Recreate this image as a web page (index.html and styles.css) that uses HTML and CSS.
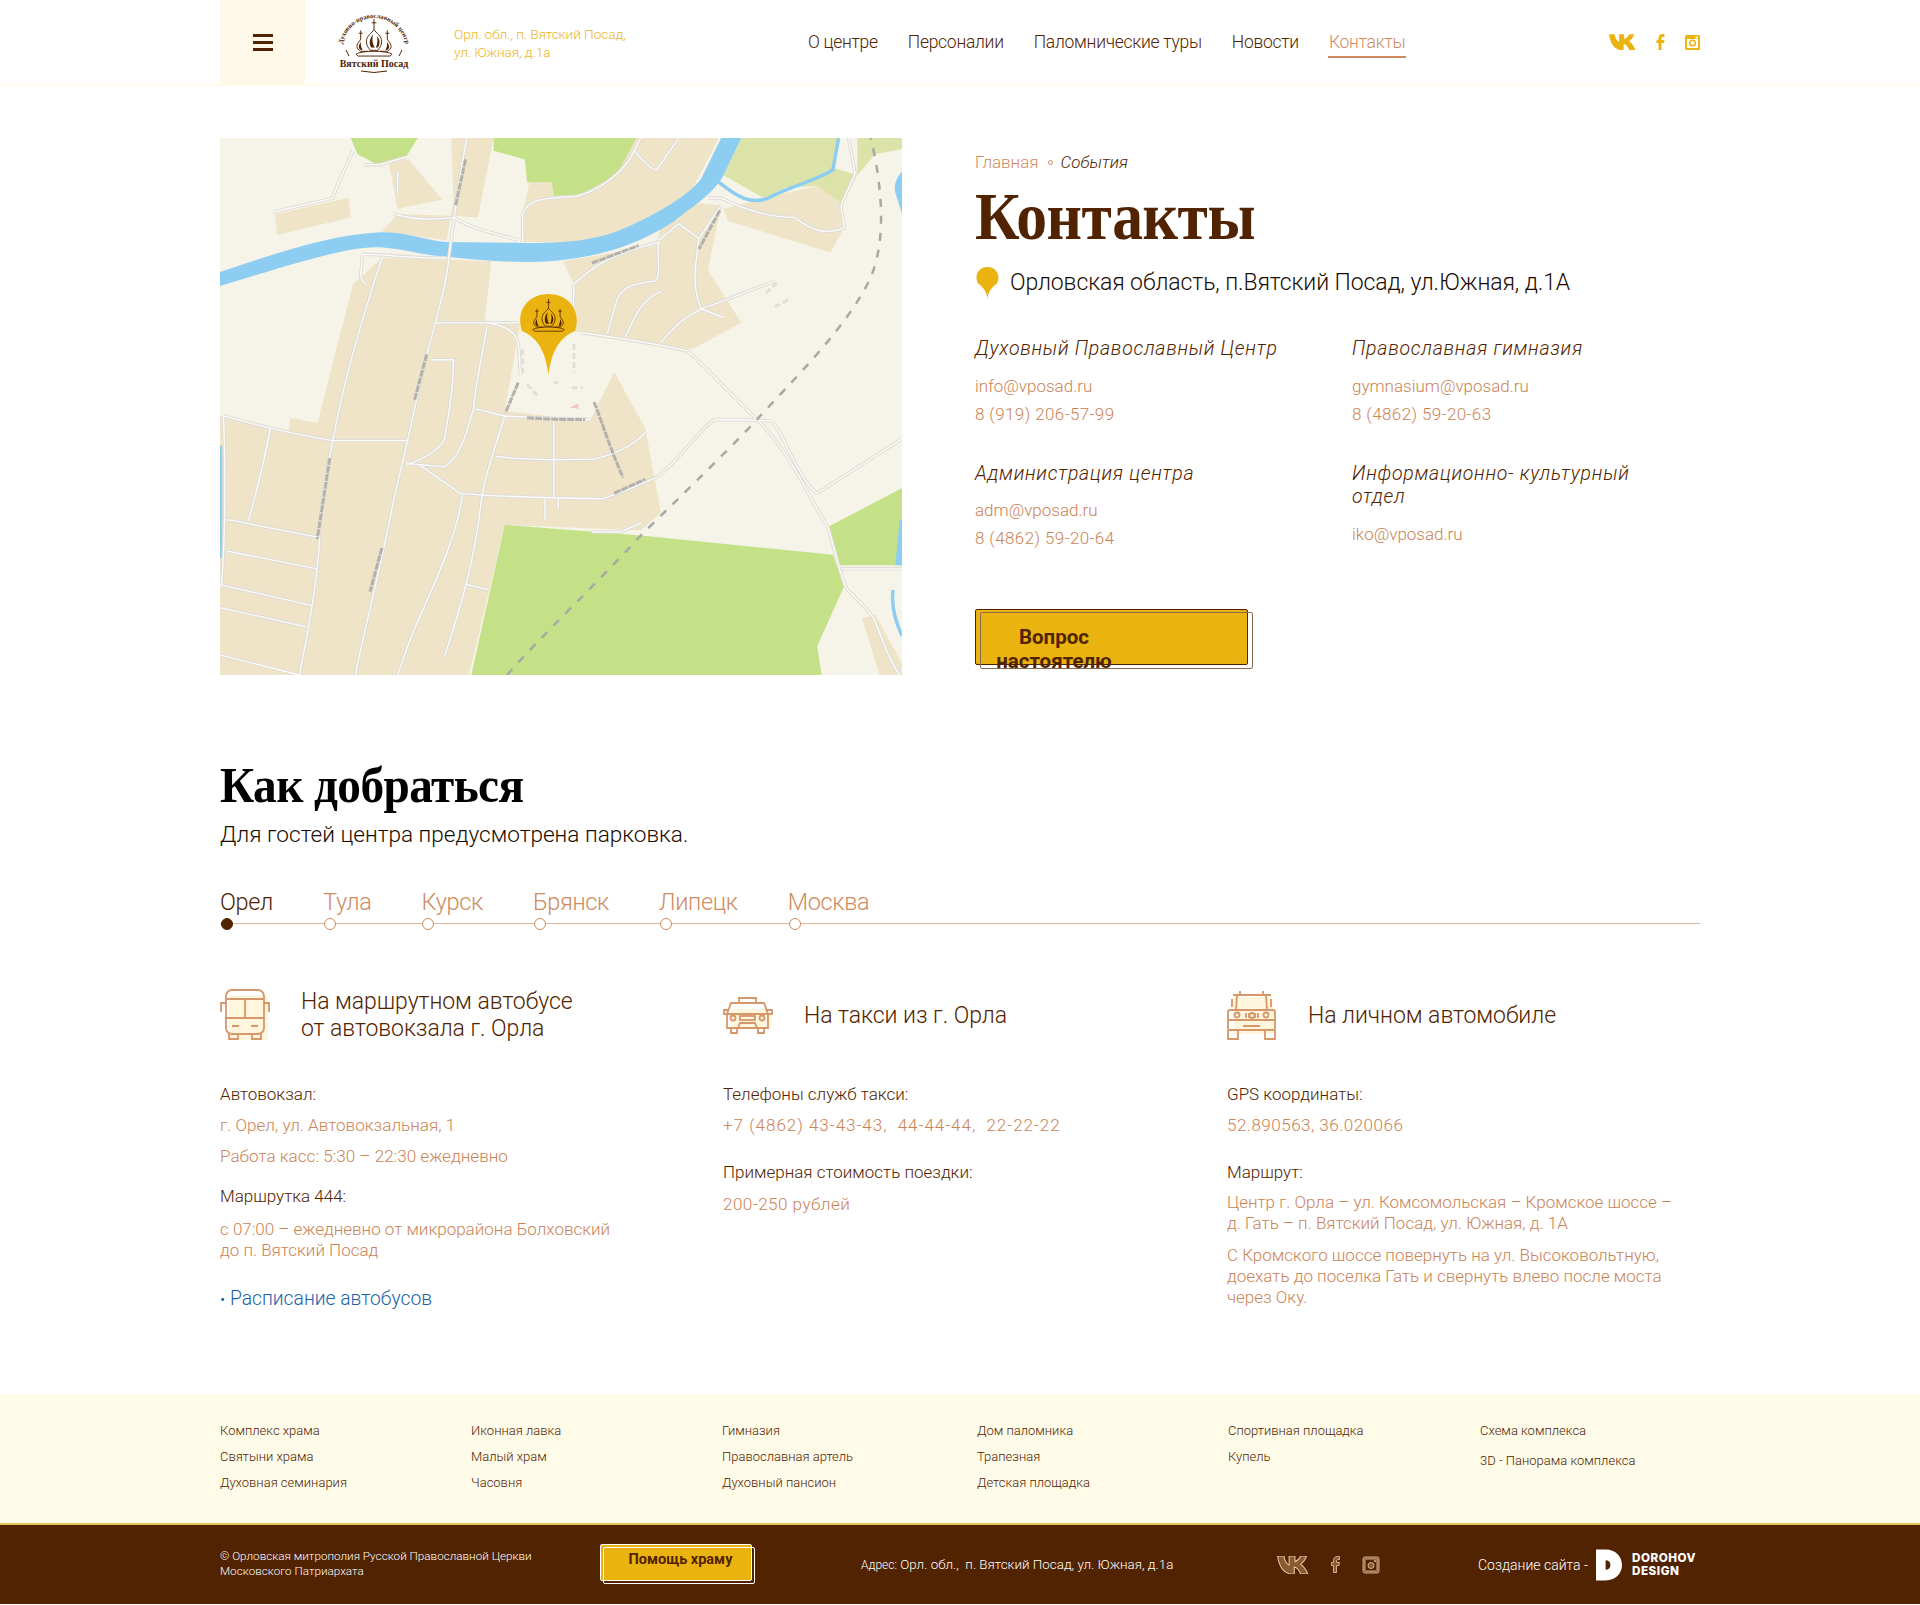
FILE: index.html
```html
<!DOCTYPE html>
<html lang="ru">
<head>
<meta charset="utf-8">
<title>Контакты</title>
<link rel="stylesheet" href="styles.css">
</head>
<body>
<svg class="defs" width="0" height="0" aria-hidden="true">
  <symbol id="domes" viewBox="0 0 40 40">
    <g class="domes-g">
      <path d="M20 0V11M17.500 4H22.500M6 12V21M4 15H8M34 12V21M32 15H36"/>
      <path d="M20 11C18 15 12 17 12 24C12 28 14 30 16 33H24C26 30 28 28 28 24C28 17 22 15 20 11Z"/>
      <path class="domes-f" d="M17 30C14 25 16 20 19 16C18 20 18 26 21 30ZM24 30C27 26 26 21 23 18C24 22 24 26 22 30Z"/>
      <path d="M6 21C5 24 2 25 2 29C2 31 4 33 6 34H14M34 21C35 24 38 25 38 29C38 31 36 33 34 34H26"/>
      <path class="domes-f" d="M5 32C3 29 5 26 6 24C6 27 6 29 8 33ZM35 32C37 29 35 26 34 24C34 27 34 29 32 33Z"/>
      <path d="M1 37C6 33 34 33 39 37L37 39H3Z"/>
    </g>
  </symbol>
  <symbol id="vk" viewBox="0 0 24 14"><path d="M0 0H5C5.300 3 7 6 9 7V0H13.500V4.500C15 4 17 2 18 0H22.500C21.700 2.500 19.800 5 18 6.500C20 7.800 22 10 23.500 14H18C17 11.500 15 9 13 8.500V14H11C5 14 1 8 0 0Z"/></symbol>
  <symbol id="fb" viewBox="0 0 9 16"><path d="M5.500 16V9H8L8.500 6H5.500V4.500C5.500 3.500 6 3 7 3H8.500V0H6.500C4 0 2.500 1.500 2.500 4V6H.5V9H2.500V16Z"/></symbol>
</svg>

<header class="header">
  <div class="burger"><span></span><span></span><span></span></div>
  <svg class="logo" viewBox="0 0 74 64" role="img" aria-label="Вятский Посад">
    <defs><path id="arc" d="M5 40A32 32 0 1 1 69 40"/></defs>
    <text class="logo-arc"><textPath href="#arc" startOffset="50%" text-anchor="middle">Духовно-православный центр</textPath></text>
    <use href="#domes" x="16" y="9" width="42" height="38"/>
    <path class="logo-tick" d="M9 40L12 46M65 40L62 46"/>
    <text class="logo-name" x="37" y="57" text-anchor="middle">Вятский Посад</text>
    <path class="logo-tick" d="M24 61Q37 64 50 61"/>
  </svg>
  <div class="head-addr">Орл. обл., п. Вятский Посад,<br>ул. Южная, д.1а</div>
  <nav class="nav">
    <a>О центре</a><a>Персоналии</a><a>Паломнические туры</a><a>Новости</a><a class="active">Контакты</a>
  </nav>
  <div class="social">
    <svg class="ic-vk"><use href="#vk"/></svg>
    <svg class="ic-f"><use href="#fb"/></svg>
    <svg class="ic-i" viewBox="0 0 15 15"><rect class="ig-b" width="15" height="15" rx="1.500"/><rect class="ig-w" x="2" y="4" width="11" height="9"/><circle class="ig-c" cx="7.500" cy="8" r="2.800"/><rect class="ig-d" x="10.500" y="1.500" width="2.500" height="2"/></svg>
  </div>
</header>

<main class="wrap">
  <section class="top">
    <div class="map">
      <svg class="map-svg" viewBox="22 24 1528 1528" preserveAspectRatio="none">
        <defs><filter id="soft"><feGaussianBlur stdDeviation="0.55"/></filter></defs>
        <g filter="url(#soft)">
        <rect class="m-cream" x="22" y="24" width="1528" height="1528"/>
        <g class="m-beige">
          <polygon points="385,365 630,375 615,545 695,550 660,800 850,830 905,690 975,850 1010,1090 965,1140 660,1125 580,1552 22,1552 22,815 175,860 180,820 240,835 320,440"/>
          <polygon points="540,24 635,24 600,250 540,245 420,240 385,290 530,315 545,200"/>
          <polygon points="950,24 1140,24 1080,170 980,260 850,320 695,320 700,240 715,150 765,150 770,190 830,185 910,130"/>
          <polygon points="145,240 310,195 315,250 150,300"/>
          <polygon points="790,375 1000,330 1010,270 1095,210 1145,215 1115,400 1190,550 1080,625 820,575 815,440"/>
          <polygon points="1150,225 1160,260 1390,350 1420,280 1410,200 1360,160 1260,190 1200,210"/>
          <polygon points="400,95 445,85 520,200 420,225"/>
          <polygon points="1460,1390 1490,1380 1550,1520 1550,1552 1500,1552"/>
        </g>
        <g class="m-green">
          <polygon points="315,24 465,24 440,75 375,100 330,70"/>
          <polygon points="635,24 955,24 910,130 830,185 770,190 765,150 710,150 705,85 635,60"/>
          <polygon points="660,1125 965,1155 1395,1210 1420,1300 1360,1470 1370,1552 585,1552"/>
          <polygon points="1385,1130 1550,1020 1550,1240 1410,1240"/>
        </g>
        <g class="m-pale">
          <polygon points="1190,24 1405,24 1400,110 1450,130 1415,210 1360,160 1290,165 1240,195 1150,130"/>
          <polygon points="1450,24 1550,24 1550,55 1490,70 1450,130"/>
        </g>
        <path class="m-blue" d="M22 405C130 360 260 300 380 292C440 290 480 315 530 320L690 322C780 325 850 318 910 290C990 250 1070 190 1100 140L1145 24H1190L1150 130C1130 180 1080 220 1040 260C980 310 900 360 760 375C680 380 600 372 530 362C460 355 420 335 370 335C300 335 180 385 22 445Z"/>
        <path class="m-blue" d="M1535 180C1530 160 1540 130 1550 120V240C1545 220 1540 200 1535 180ZM22 900H27V1220H22ZM1545 1110H1550V1240H1535Z"/>
        <path class="m-river" d="M1140 150C1180 190 1210 215 1250 195C1300 160 1350 150 1395 115L1408 24M1530 1310C1525 1360 1535 1400 1550 1440"/>
        <g class="m-road"><g id="roads">
          <path d="M320 60C300 120 285 150 275 195L140 235M345 100L380 100 440 78M420 120V180M575 24C560 120 550 220 535 360C530 450 500 560 470 720C450 850 430 950 410 1060C390 1200 350 1400 325 1552"/>
          <path d="M410 240C450 255 500 258 545 250C590 285 640 295 690 315M700 320V240C710 200 740 195 820 190C870 175 930 120 950 60L965 24M950 60C970 90 990 115 1000 115L1050 24"/>
          <path d="M340 355C400 355 480 370 530 365M340 355C345 390 325 420 350 440M385 365C350 500 300 700 275 885C255 1000 240 1150 245 1165C240 1300 215 1450 200 1552"/>
          <path d="M815 440C815 480 810 530 815 575M815 440C850 400 880 360 1005 320C1000 360 1010 400 1000 430C940 440 920 450 910 490L890 580M1010 460C960 490 950 540 930 590M1005 315L1050 268 1095 310 1145 215M1115 195H1145C1200 230 1260 250 1310 250C1350 290 1380 300 1420 280C1420 240 1410 230 1415 210L1445 125L1430 24M1095 310C1085 400 1080 450 1100 510C1040 550 1030 580 1010 605M1100 510C1150 490 1220 450 1270 430M1100 510L1150 535"/>
          <path d="M505 550H690M620 550C700 565 690 600 695 700M620 560C610 640 595 720 590 795C570 880 560 930 525 960L440 950M495 655H545C545 750 530 840 525 880C510 920 470 940 440 955M595 795L660 815C720 820 780 822 850 825M660 815C640 900 610 1000 605 1080C590 1250 550 1400 525 1500"/>
          <path d="M30 815C100 840 200 870 275 885H440M135 850C120 950 100 1050 85 1115M30 815C35 1000 35 1150 25 1300M40 1110L240 1160M40 1200L240 1250M22 1295L230 1355M22 1360L215 1415M22 1495L200 1552"/>
          <path d="M470 955L560 1035C650 1045 800 1050 880 1050C930 1030 960 1010 1000 990C1060 930 1090 860 1130 825C1180 825 1200 825 1260 830M640 930C700 940 800 940 860 938C900 925 950 900 975 860M770 830V1050M750 1050V1110M780 1050V1080M565 1040C555 1150 500 1300 465 1400C440 1470 430 1520 420 1552M575 1295L625 1310M855 1145H920L965 1120"/>
          <path d="M830 578C900 590 1000 610 1070 630C1130 700 1170 760 1225 825C1290 900 1340 1040 1385 1135C1400 1200 1415 1280 1425 1305C1450 1340 1480 1370 1490 1400C1510 1470 1530 1530 1545 1552M1415 1250H1550M1360 1035L1550 880M1260 830C1290 880 1320 1000 1360 1035"/>
        </g></g>
        <g class="m-road-in"><use href="#roads"/></g>
        <path class="m-rail" d="M665 1552C750 1430 860 1300 965 1155C1040 1060 1140 940 1225 825C1300 720 1430 560 1480 420C1520 300 1500 130 1480 24"/>
        <g class="m-dark">
          <path d="M572 85L550 215M1142 230L1095 340M855 380L960 330M485 640L458 770M690 720L662 805M710 820C760 825 800 825 840 825M860 775C880 840 900 920 925 990M905 1035L975 995M268 935L240 1165M385 1190L358 1315"/>
        </g>
        <g class="m-faint">
          <path d="M700 625V700M815 610V690M710 725L735 760M770 720H780M810 735H835M1245 465L1270 435M1265 505L1300 480"/>
        </g>
        <path class="m-red" d="M805 790L825 780V795Z"/>
        </g>
      </svg>
      <svg class="map-pin" viewBox="0 0 59 81">
        <path class="pin-f" d="M29.500 81C27 60 20 44 3 37C-4 16 10 0 29.500 0C49 0 63 16 56 37C39 44 32 60 29.500 81Z"/>
        <use href="#domes" x="13" y="5" width="33" height="33"/>
      </svg>
    </div>
    <div class="info">
      <div class="crumbs"><a>Главная</a><i class="crumb-dot"></i><em>События</em></div>
      <h1 class="title">Контакты</h1>
      <div class="addr">
        <svg class="addr-pin" viewBox="0 0 24 32"><path class="pin-f" d="M12 32C11.500 26 9 21 3 17C-2 9 3 0 12 0C21 0 26 9 21 17C15 21 12.500 26 12 32Z"/></svg>
        <span>Орловская область, п.Вятский Посад, ул.Южная, д.1А</span>
      </div>
      <div class="contacts">
        <div class="c-item">
          <h3>Духовный Православный Центр</h3>
          <a>info@vposad.ru</a><a class="tel">8 (919) 206-57-99</a>
        </div>
        <div class="c-item">
          <h3>Православная гимназия</h3>
          <a>gymnasium@vposad.ru</a><a class="tel">8 (4862) 59-20-63</a>
        </div>
        <div class="c-item">
          <h3>Администрация центра</h3>
          <a>adm@vposad.ru</a><a class="tel">8 (4862) 59-20-64</a>
        </div>
        <div class="c-item">
          <h3>Информационно- культурный отдел</h3>
          <a>iko@vposad.ru</a>
        </div>
      </div>
      <a class="ask"><span>Вопрос настоятелю</span></a>
    </div>
  </section>

  <section class="how">
    <h2 class="how-title">Как добраться</h2>
    <p class="how-sub">Для гостей центра предусмотрена парковка.</p>
    <div class="tabs">
      <a class="tab on">Орел</a><a class="tab">Тула</a><a class="tab">Курск</a><a class="tab">Брянск</a><a class="tab">Липецк</a><a class="tab">Москва</a>
    </div>
    <div class="ways">
      <div class="way">
        <div class="way-head">
          <svg class="way-ic" viewBox="0 0 50 52">
            <rect class="ic-bg" x="9" y="6" width="39" height="45" rx="3"/>
            <g class="ic-ln">
              <rect x="6" y="1" width="38" height="44" rx="6"/>
              <path d="M6 10H44M6 29H44M25 10V29M6 14H1V23M44 14H49V23M12 37H19M31 37H38M9 45V50H18V45M32 45V50H41V45"/>
            </g>
          </svg>
          <div class="way-title">На маршрутном автобусе<br>от автовокзала г. Орла</div>
        </div>
        <p class="lab">Автовокзал:</p>
        <p class="val">г. Орел, ул. Автовокзальная, 1</p>
        <p class="val">Работа касс: 5:30 – 22:30 ежедневно</p>
        <p class="lab sp">Маршрутка 444:</p>
        <p class="val tight">с 07:00 – ежедневно от микрорайона Болховский<br>до п. Вятский Посад</p>
        <a class="sched"><i>•</i> Расписание автобусов</a>
      </div>
      <div class="way">
        <div class="way-head">
          <svg class="way-ic taxi" viewBox="0 0 50 40">
            <path class="ic-bg" d="M8 14H42L48 20V34H8Z"/>
            <g class="ic-ln">
              <path d="M16 8V3H33V8M8 8H41L45 19V33H4V19ZM4 19H45M4 19H1V15H5M45 19H49V15H44M8 33V38H14V33M35 33V38H41V33M15 33L17 28H32L34 33"/>
              <rect x="17" y="21" width="15" height="4"/><circle cx="10" cy="23" r="2.500"/><circle cx="39" cy="23" r="2.500"/>
            </g>
          </svg>
          <div class="way-title">На такси из г. Орла</div>
        </div>
        <p class="lab">Телефоны служб такси:</p>
        <p class="val wide">+7 (4862) 43-43-43,&nbsp; 44-44-44,&nbsp; 22-22-22</p>
        <p class="lab sp2">Примерная стоимость поездки:</p>
        <p class="val num">200-250 рублей</p>
      </div>
      <div class="way">
        <div class="way-head">
          <svg class="way-ic" viewBox="0 0 50 50">
            <path class="ic-bg" d="M6 7H46V22H49V44H6Z"/>
            <g class="ic-ln">
              <path d="M9 20L10 5H39L40 20M6 5H44M13 1V5M36 1V5M5 9V17M44 9V17"/>
              <rect x="1" y="20" width="47" height="20" rx="2"/>
              <path d="M1 30H48M1 40V49H11V40M38 40V49H48V40M16 36H33M19 23V28M22 23V28M28 23V28M31 23V28"/>
              <circle cx="10" cy="25" r="2.500"/><circle cx="39" cy="25" r="2.500"/><circle cx="25" cy="25.500" r="2.500"/>
            </g>
          </svg>
          <div class="way-title">На личном автомобиле</div>
        </div>
        <p class="lab">GPS координаты:</p>
        <p class="val num">52.890563, 36.020066</p>
        <p class="lab sp2">Маршрут:</p>
        <p class="val tight">Центр г. Орла – ул. Комсомольская – Кромское шоссе –<br>д. Гать – п. Вятский Посад, ул. Южная, д. 1А</p>
        <p class="val tight next">С Кромского шоссе повернуть на ул. Высоковольтную,<br>доехать до поселка Гать и свернуть влево после моста<br>через Оку.</p>
      </div>
    </div>
  </section>
</main>

<footer>
  <div class="foot-nav">
    <div class="wrap foot-cols">
      <ul><li>Комплекс храма</li><li>Святыни храма</li><li>Духовная семинария</li></ul>
      <ul><li>Иконная лавка</li><li>Малый храм</li><li>Часовня</li></ul>
      <ul><li>Гимназия</li><li>Православная артель</li><li>Духовный пансион</li></ul>
      <ul class="w4"><li>Дом паломника</li><li>Трапезная</li><li>Детская площадка</li></ul>
      <ul><li>Спортивная площадка</li><li>Купель</li></ul>
      <ul class="last"><li>Схема комплекса</li><li>3D - Панорама комплекса</li></ul>
    </div>
  </div>
  <div class="foot-bot">
    <div class="wrap bot-row">
      <div class="copy">© Орловская митрополия Русской Православной Церкви<br>Московского Патриархата</div>
      <a class="help"><span>Помощь храму</span></a>
      <div class="foot-addr"><small>Адрес:</small> Орл. обл.,&nbsp; п. Вятский Посад, ул. Южная, д.1а</div>
      <div class="foot-soc">
        <svg class="fs-vk"><use href="#vk"/></svg>
        <svg class="fs-f"><use href="#fb"/></svg>
        <svg class="fs-i" viewBox="0 0 18 18"><rect x="1" y="1" width="16" height="16" rx="2"/><rect class="fs-in" x="3" y="3" width="12" height="12" rx="1"/><circle cx="9" cy="9.500" r="3"/><circle cx="13" cy="5" r=".8"/></svg>
      </div>
      <div class="made">Создание сайта -</div>
      <svg class="dd" viewBox="0 0 27 32"><path class="dd-w" d="M0 0H10C20 0 27 7 27 16C27 25 20 32 10 32H0ZM10 11V21C13 21 15 19 15 16C15 13 13 11 10 11Z"/></svg>
      <div class="dd-text">DOROHOV<br>DESIGN</div>
    </div>
  </div>
</footer>
</body>
</html>
```
FILE: styles.css
```css
* { box-sizing: border-box; }
html, body { margin: 0; padding: 0; }
body { font-family: "Roboto", "Noto Sans", sans-serif; font-weight: 300; color: #512300; background: #fff; }
a { color: inherit; text-decoration: none; }
p, h1, h2, h3, ul { margin: 0; padding: 0; }
ul { list-style: none; }
.defs { position: absolute; }
.wrap { width: 1480px; margin: 0 auto; }

/* domes */
.domes-g path { fill: none; stroke: #512300; stroke-width: 1; }
.domes-g .domes-f { fill: #512300; stroke: none; }

/* header */
.header { height: 86px; border-bottom: 2px solid #fffaea; display: flex; align-items: center; padding-left: 220px; }
.burger { width: 85px; height: 84px; background: #fef9e8; display: flex; flex-direction: column; justify-content: center; align-items: center; gap: 4px; flex: none; }
.burger span { width: 20px; height: 3px; background: #512300; }
.logo { width: 74px; height: 64px; margin-left: 32px; flex: none; overflow: visible; }
.logo-arc { font: bold 6.500px "Liberation Serif", serif; fill: #512300; }
.logo-name { font: bold 10px "Liberation Serif", serif; fill: #512300; }
.logo-tick { fill: none; stroke: #512300; stroke-width: 1; }
.head-addr { width: 300px; margin-left: 43px; padding-top: 2px; font-size: 13.700px; line-height: 18px; color: #eeb61c; letter-spacing: -.1px; }
.nav { display: flex; gap: 28px; margin-left: 53px; font-size: 17.500px; font-weight: 300; letter-spacing: -.28px; padding-top: 2px; }
.nav a { padding: 2px 1px 2px; border-bottom: 2px solid transparent; line-height: 23px; }
.nav a.active { color: #cf8b5f; border-bottom-color: #cf8b5f; }
.social { margin-left: auto; margin-right: 220px; display: flex; align-items: center; gap: 20px; }
.social svg { fill: #eab30f; display: block; }
.ic-vk { width: 27px; height: 16px; }
.ic-f { width: 9px; height: 16px; }
.ic-i { width: 15px; height: 15px; }
.ig-b { fill: #eab30f; }
.ig-w { fill: #fff; }
.ig-c { fill: none; stroke: #eab30f; stroke-width: 1.500; }
.ig-d { fill: #fff; }

/* top */
.top { display: flex; padding-top: 52px; }
.map { width: 682px; height: 537px; flex: none; position: relative; overflow: hidden; }
.map-svg { width: 682px; height: 537px; display: block; }
.m-cream { fill: #f6f4e9; }
.m-beige polygon { fill: #efe4c8; }
.m-green polygon { fill: #c5e188; }
.m-pale polygon { fill: #dbe3a8; }
.m-blue { fill: #8dcdf2; }
.m-river { fill: none; stroke: #8dcdf2; stroke-width: 3.500px; vector-effect: non-scaling-stroke; }
.m-road { fill: none; stroke: #dfddd8; stroke-width: 3.500px; }
.m-road path { vector-effect: non-scaling-stroke; }
.m-road-in { fill: none; stroke: #fdfcf8; stroke-width: 1.300px; }
.m-rail { fill: none; stroke: #a8a8a4; stroke-width: 2.500px; stroke-dasharray: 8 9; vector-effect: non-scaling-stroke; }
.m-dark path { fill: none; stroke: #b3b1ad; stroke-width: 3px; stroke-dasharray: 7 1; vector-effect: non-scaling-stroke; }
.m-faint path { fill: none; stroke: #e2e0d6; stroke-width: 3px; stroke-dasharray: 6 3; vector-effect: non-scaling-stroke; }
.m-red { fill: #f0c8b8; }
.map-pin { position: absolute; left: 299px; top: 156px; width: 59px; height: 81px; }
.pin-f { fill: #eab30f; }

.info { margin-left: 73px; flex: 1; padding-top: 14px; }
.crumbs { display: flex; align-items: center; font-size: 17px; line-height: 20px; color: #cf8b5f; }
.crumbs em { color: #512300; font-style: italic; }
.crumb-dot { width: 5px; height: 5px; border: 1px solid #cf8b5f; border-radius: 50%; margin: 0 8px 0 9px; }
.title { font: bold 67px/70px "Liberation Serif", serif; color: #512300; margin-top: 9px; letter-spacing: -.5px; transform: scaleX(.92); transform-origin: left center; }
.addr { display: flex; align-items: center; gap: 10px; margin-top: 16px; font-size: 23px; line-height: 32px; color: #1a0c00; letter-spacing: -.1px; }
.addr-pin { width: 25px; height: 32px; flex: none; }
.contacts { display: grid; grid-template-columns: 377px 1fr; row-gap: 34px; margin-top: 38px; }
.c-item { display: flex; flex-direction: column; }
.c-item h3 { font-size: 19.500px; font-weight: 300; font-style: italic; line-height: 23.500px; width: 310px; margin-bottom: 11px; letter-spacing: .72px; }
.c-item a { font-size: 17px; line-height: 28px; color: #ca8456; }
.c-item a.tel { letter-spacing: .4px; }
.ask { display: block; width: 273px; height: 56px; margin-top: 57px; background: #eab30f; border: 1px solid #512300; border-radius: 2px; position: relative; font-weight: 700; font-size: 20.500px; line-height: 24px; }
.ask::after { content: ""; position: absolute; left: 4px; top: 2px; width: 271px; height: 55px; border: 1px solid #8a6a50; border-radius: 2px; }
.ask span { display: block; width: 126px; margin-left: 15px; padding-top: 15px; height: 58px; overflow: hidden; text-align: center; position: relative; }

/* how */
.how { padding-top: 80px; }
.how-title { font: bold 50px/60px "Liberation Serif", serif; color: #000; letter-spacing: -.6px; transform: scaleX(.945); transform-origin: left center; }
.how-sub { font-size: 22.600px; line-height: 30px; color: #1a0c00; margin-top: 5px; }
.tabs { display: flex; gap: 50px; margin-top: 36px; border-bottom: 1px solid #e0b596; height: 38px; }
.tab { position: relative; font-size: 23.500px; line-height: 32px; color: #cf8b5f; letter-spacing: -.33px; }
.tab::after { content: ""; position: absolute; left: 1px; top: 32px; width: 10px; height: 10px; border-radius: 50%; border: 1px solid #cf8b5f; background: #fff; }
.tab.on { color: #512300; }
.tab.on::after { background: #512300; border-color: #512300; }
.ways { display: grid; grid-template-columns: 503px 504px 473px; margin-top: 65px; }
.way-head { display: flex; align-items: center; gap: 31px; height: 52px; margin-bottom: 41px; }
.way-ic { width: 50px; height: 52px; flex: none; }
.way-ic.taxi { height: 40px; }
.ic-bg { fill: #fff6dd; }
.ic-ln { fill: none; stroke: #d6976b; stroke-width: 1.800; }
.way-title { font-size: 23px; line-height: 27px; letter-spacing: -.05px; }
.lab { font-size: 17px; line-height: 24px; color: #512300; margin-bottom: 7px; }
.lab.sp { margin-top: 16px; margin-bottom: 11px; }
.lab.sp2 { margin-top: 23px; margin-bottom: 8px; }
.val { font-size: 17.100px; line-height: 24px; color: #ca8456; margin-bottom: 7px; }
.val.wide { letter-spacing: .95px; }
.val.num { letter-spacing: .45px; }
.val.tight { font-size: 17px; line-height: 21px; margin-bottom: 0; }
.val.next { margin-top: 11px; }
.sched { display: block; margin-top: 25px; font-size: 19.300px; line-height: 26px; color: #1a63a8; }
.sched i { font-style: normal; font-size: 16px; }

/* footer */
footer { margin-top: 81px; }
.foot-nav { height: 131px; background: #fffbe9; border-bottom: 2px solid #e8c25a; padding-top: 24px; }
.foot-cols { display: grid; grid-template-columns: 251px 251px 255px 251px 252px 1fr; }
.foot-cols li { font-size: 13px; line-height: 26px; }
.foot-cols .last li + li { margin-top: 4px; }
.foot-bot { height: 79px; background: #512300; color: #fff; }
.bot-row { display: flex; align-items: center; height: 79px; position: relative; }
.copy { width: 380px; font-size: 11.700px; line-height: 15px; color: #fff; margin-bottom: 2px; }
.help { display: block; width: 152px; height: 37px; margin-bottom: 4px; background: #eab30f; border: 1px solid #fff; border-radius: 2px; position: relative; color: #512300; font-weight: 700; font-size: 14.500px; line-height: 30px; text-align: center; padding-left: 9px; }
.help::after { content: ""; position: absolute; left: 2px; top: 2px; width: 150px; height: 35px; border: 1px solid #fff; border-radius: 2px; }
.foot-addr { width: 416px; margin-left: 109px; font-size: 13.400px; }
.foot-addr small { font-size: 12px; }
.foot-soc { display: flex; align-items: center; gap: 22px; width: 201px; }
.foot-soc svg { display: block; fill: #8a5a30; stroke: #e8c9a8; stroke-width: .8; overflow: visible; }
.fs-vk { width: 32px; height: 18px; }
.fs-f { width: 9px; height: 17px; }
.fs-i { width: 18px; height: 18px; fill: none; }
.foot-soc svg.fs-i { fill: #8a5a30; }
.foot-soc .fs-in { fill: #512300; }
.made { font-size: 14px; margin-right: 5px; width: 113px; }
.dd { width: 26px; height: 32px; flex: none; }
.dd-w { fill: #fff; fill-rule: evenodd; }
.dd-text { margin-left: 10px; font-family: "Inter", "Roboto", sans-serif; font-weight: 800; font-size: 11.700px; line-height: 13px; letter-spacing: .5px; color: #fff; }
```
